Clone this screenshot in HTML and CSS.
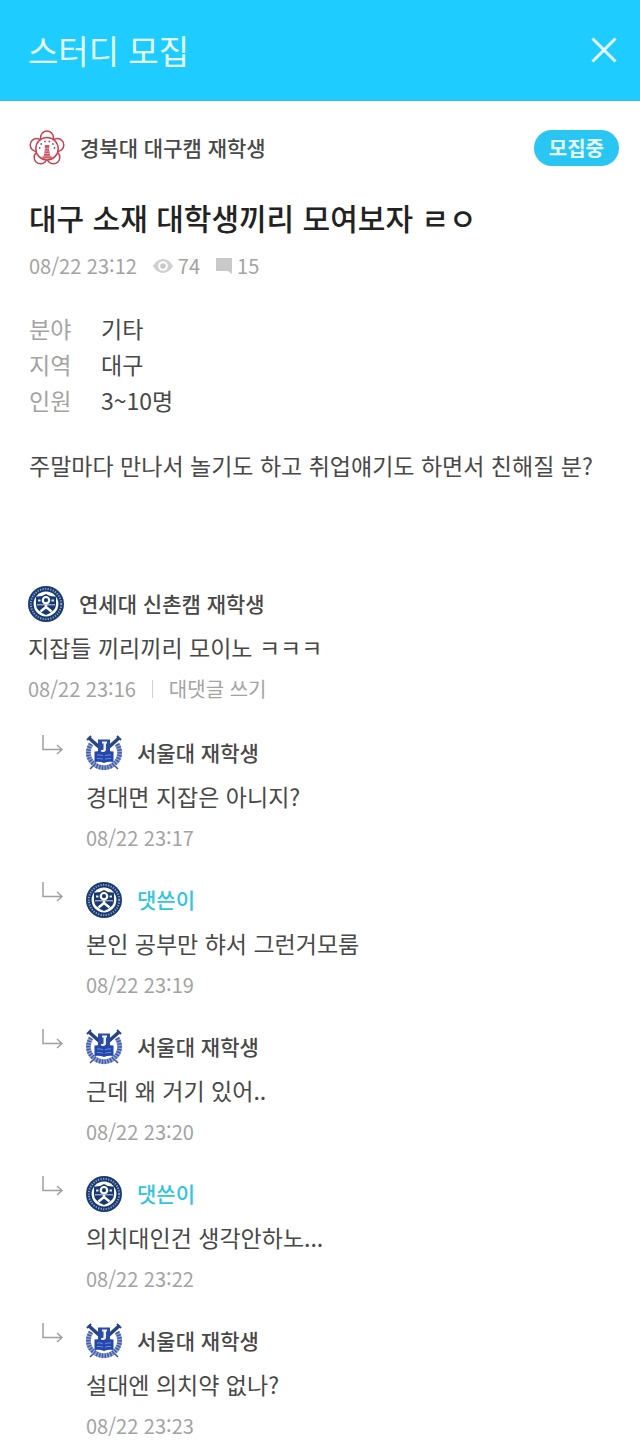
FILE: index.html
```html
<!DOCTYPE html>
<html lang="ko">
<head>
    <meta charset="UTF-8">
    <meta name="viewport" content="width=device-width, initial-scale=1.0">
    <title>스터디 모집</title>
    <link rel="stylesheet" href="styles.css">
</head>
<body>
    <!-- shared icons -->
    <svg class="sprite" aria-hidden="true">
        <symbol id="logo-knu" viewBox="0 0 36 36">
            <g fill="#fff" stroke="#c8414d" stroke-width="1.5">
                <circle cx="18" cy="7.5" r="6.4"/>
                <circle cx="28.4" cy="15" r="6.4"/>
                <circle cx="24.4" cy="27.4" r="6.4"/>
                <circle cx="11.6" cy="27.4" r="6.4"/>
                <circle cx="7.6" cy="15" r="6.4"/>
                <circle cx="18" cy="18.7" r="11.2"/>
            </g>
            <g fill="#94565d">
                <circle cx="10.7" cy="18" r="0.9"/>
                <circle cx="12.2" cy="14" r="0.9"/>
                <circle cx="16" cy="11.5" r="0.9"/>
                <circle cx="20.4" cy="11.5" r="0.9"/>
                <circle cx="24" cy="14" r="0.9"/>
                <circle cx="25.5" cy="18" r="0.9"/>
            </g>
            <path d="M16 15h4.4v2l-.5 1.500 1.300 7.500h1.300v2.500h-9V26h1.300l1.300-7.500-.4-1.500z" fill="#c55c67"/>
            <path d="M15.500 18.500h5.200M15.500 21h5.600M15 23.500h6.500M14 26.200h8.200" stroke="#efb9be" stroke-width=".7"/>
        </symbol>
        <symbol id="logo-yonsei" viewBox="0 0 36 36">
            <circle cx="18" cy="18" r="18" fill="#18396f"/>
            <circle cx="18" cy="18" r="15.200" fill="none" stroke="#8fa5c6" stroke-width="2" stroke-dasharray="1.200 1.400"/>
            <circle cx="18" cy="18" r="12.400" fill="#fff"/>
            <path d="M8 10.500q5.500.5 10-2.500 4.500 3 10 2.500v8q0 6.500-10 10.500Q8 25 8 18.500z" fill="#18396f"/>
            <path d="M9 18.800h18" stroke="#cad6e7" stroke-width="1"/>
            <path d="M10 14.500h2.500M23.500 14.500h2.500" stroke="#e4ebf5" stroke-width="2"/>
            <circle cx="18" cy="14.200" r="3.200" fill="#18396f" stroke="#fff" stroke-width="2.200"/>
            <path d="M18 19v3M18 21l-5.500 4.500M18 21l5.500 4.500" stroke="#fff" stroke-width="2.400" fill="none"/>
        </symbol>
        <symbol id="logo-snu" viewBox="0 0 36 36">
            <path d="M4 34 10 28M32 34l-6-6" stroke="#34549a" stroke-width="1.500"/>
            <path d="M5 9C0 17 2 27 12 31.500q6 2.500 12 0C34 27 36 17 31 9" fill="none" stroke="#93a5d3" stroke-width="5"/>
            <path d="M5 9C0 17 2 27 12 31.500q6 2.500 12 0C34 27 36 17 31 9" fill="none" stroke="#3f5aa8" stroke-width="4.500" stroke-dasharray="1.400 1.400"/>
            <path d="M3 3l10 9M33 3l-10 9" stroke="#284582" stroke-width="3.500"/>
            <path d="M1 5l4-4M35 5l-4-4" stroke="#284582" stroke-width="2"/>
            <path d="M12 4.500h12V19H12z" fill="#2b4ca2"/>
            <path d="M16 6.500h5v2h-1V14q0 3-3 3h-2v-2h1.500q1 0 1-1V8.500H16z" fill="#eef3ff"/>
            <path d="M8.500 16.500q5-1 9.500 1 4.500-2 9.500-1V27q-5-1-9.500 1-4.500-2-9.500-1z" fill="#2447ae"/>
            <path d="M11 20q3-.5 6 .8M19 20.800q3-1.300 6-.8M11 23.500q3-.5 6 .8M19 24.300q3-1.300 6-.8" stroke="#7f9be0" stroke-width=".8" fill="none"/>
        </symbol>
        <symbol id="icon-reply" viewBox="0 0 22 22">
            <path d="M1 0v14.500h19M15 10l5 4.500-5 4.500" fill="none" stroke="#a0a0a0" stroke-width="1.500"/>
        </symbol>
    </svg>

    <header class="topbar">
        <h1>스터디 모집</h1>
        <button class="close" type="button" aria-label="닫기">
            <svg viewBox="0 0 26 26"><path d="M1.500 1.500l23 23M24.500 1.500l-23 23" stroke="#e6ffff" stroke-width="3"/></svg>
        </button>
    </header>

    <main>
        <article class="post">
            <div class="author">
                <svg class="avatar"><use href="#logo-knu"/></svg>
                <span class="name">경북대 대구캠 재학생</span>
                <span class="badge">모집중</span>
            </div>
            <h2>대구 소재 대학생끼리 모여보자 ㄹㅇ</h2>
            <div class="meta">
                <time>08/22 23:12</time>
                <span class="count">
                    <svg class="eye" viewBox="0 0 20 14"><path d="M0 7Q4 0 10 0t10 7q-4 7-10 7T0 7z" fill="#d0d0d0"/><circle cx="10" cy="7" r="4.800" fill="#fff"/><circle cx="10" cy="7" r="2.800" fill="#c8c8c8"/></svg>
                    74
                </span>
                <span class="count">
                    <svg class="bubble" viewBox="0 0 16 16"><path d="M0 0h16v16l-4-3H0z" fill="#c9c9c9"/></svg>
                    15
                </span>
            </div>
            <dl class="info">
                <dt>분야</dt><dd>기타</dd>
                <dt>지역</dt><dd>대구</dd>
                <dt>인원</dt><dd>3~10명</dd>
            </dl>
            <p class="text">주말마다 만나서 놀기도 하고 취업얘기도 하면서 친해질 분?</p>
        </article>

        <section class="comments">
            <div class="comment">
                <div class="author">
                    <svg class="avatar"><use href="#logo-yonsei"/></svg>
                    <span class="name">연세대 신촌캠 재학생</span>
                </div>
                <p class="text">지잡들 끼리끼리 모이노 ㅋㅋㅋ</p>
                <div class="meta">
                    <time>08/22 23:16</time>
                    <button class="write-reply" type="button">대댓글 쓰기</button>
                </div>
            </div>

            <div class="reply">
                <svg class="arrow"><use href="#icon-reply"/></svg>
                <div class="comment">
                    <div class="author">
                        <svg class="avatar"><use href="#logo-snu"/></svg>
                        <span class="name">서울대 재학생</span>
                    </div>
                    <p class="text">경대면 지잡은 아니지?</p>
                    <div class="meta"><time>08/22 23:17</time></div>
                </div>
            </div>

            <div class="reply">
                <svg class="arrow"><use href="#icon-reply"/></svg>
                <div class="comment">
                    <div class="author">
                        <svg class="avatar"><use href="#logo-yonsei"/></svg>
                        <span class="name writer">댓쓴이</span>
                    </div>
                    <p class="text">본인 공부만 햐서 그런거모룸</p>
                    <div class="meta"><time>08/22 23:19</time></div>
                </div>
            </div>

            <div class="reply">
                <svg class="arrow"><use href="#icon-reply"/></svg>
                <div class="comment">
                    <div class="author">
                        <svg class="avatar"><use href="#logo-snu"/></svg>
                        <span class="name">서울대 재학생</span>
                    </div>
                    <p class="text">근데 왜 거기 있어..</p>
                    <div class="meta"><time>08/22 23:20</time></div>
                </div>
            </div>

            <div class="reply">
                <svg class="arrow"><use href="#icon-reply"/></svg>
                <div class="comment">
                    <div class="author">
                        <svg class="avatar"><use href="#logo-yonsei"/></svg>
                        <span class="name writer">댓쓴이</span>
                    </div>
                    <p class="text">의치대인건 생각안하노...</p>
                    <div class="meta"><time>08/22 23:22</time></div>
                </div>
            </div>

            <div class="reply">
                <svg class="arrow"><use href="#icon-reply"/></svg>
                <div class="comment">
                    <div class="author">
                        <svg class="avatar"><use href="#logo-snu"/></svg>
                        <span class="name">서울대 재학생</span>
                    </div>
                    <p class="text">설대엔 의치약 없나?</p>
                    <div class="meta"><time>08/22 23:23</time></div>
                </div>
            </div>
        </section>
    </main>
</body>
</html>
```

FILE: styles.css
```css
* {
    box-sizing: border-box;
    margin: 0;
    padding: 0;
}
body {
    background-color: #fff;
    color: #484848;
    font-family: "Noto Sans CJK KR", sans-serif;
    font-size: 23px;
    line-height: 36px;
}
button {
    border: 0;
    background: none;
    font: inherit;
    color: inherit;
    cursor: pointer;
}
svg {
    display: block;
    flex: none;
}
.sprite {
    position: absolute;
    width: 0;
    height: 0;
}
.topbar {
    display: flex;
    align-items: center;
    justify-content: space-between;
    height: 101px;
    padding: 0 23px 0 28px;
    background-color: #1eccff;
    border-bottom: 1px solid #32bfe8;
}
.topbar h1 {
    color: #e6ffff;
    font-size: 33px;
    font-weight: 400;
    line-height: 48px;
}
.close svg {
    width: 26px;
    height: 26px;
}
main {
    padding: 29px 21px 0 28px;
}
.post {
    padding-left: 1px;
}
.author {
    display: flex;
    align-items: center;
    gap: 15px;
    height: 36px;
}
.avatar {
    width: 36px;
    height: 36px;
}
.name {
    padding-bottom: 2px;
    font-size: 21px;
    font-weight: 500;
}
.writer {
    color: #30c5dd;
}
.badge {
    margin-left: auto;
    padding: 0 15px;
    border-radius: 18px;
    background-color: #29c5f3;
    color: #e6ffff;
    font-size: 20px;
    font-weight: 700;
}
.post h2 {
    margin-top: 29px;
    color: #222;
    font-size: 30px;
    font-weight: 500;
    line-height: 44px;
}
.meta {
    display: flex;
    align-items: center;
    color: #a3a3a3;
    font-size: 20px;
    line-height: 30px;
}
.post .meta {
    gap: 16px;
    margin-top: 12px;
}
.count {
    display: flex;
    align-items: center;
    gap: 5px;
}
.eye {
    width: 20px;
    height: 14px;
}
.bubble {
    width: 16px;
    height: 16px;
}
.info {
    display: grid;
    grid-template-columns: 72px 1fr;
    margin: 29px 0;
}
.info dt {
    color: #a3a3a3;
}
.comments {
    display: flex;
    flex-direction: column;
    gap: 29px;
    margin-top: 103px;
}
.comments > .comment {
    padding-bottom: 2px;
}
.comment .text {
    margin: 7px 0 9px;
}
.write-reply {
    display: flex;
    align-items: center;
}
.write-reply::before {
    content: "";
    width: 1px;
    height: 18px;
    margin: 0 16px;
    background-color: #d0d0d0;
}
.reply {
    display: flex;
    gap: 22px;
    padding-left: 14px;
}
.arrow {
    width: 22px;
    height: 22px;
}
```
